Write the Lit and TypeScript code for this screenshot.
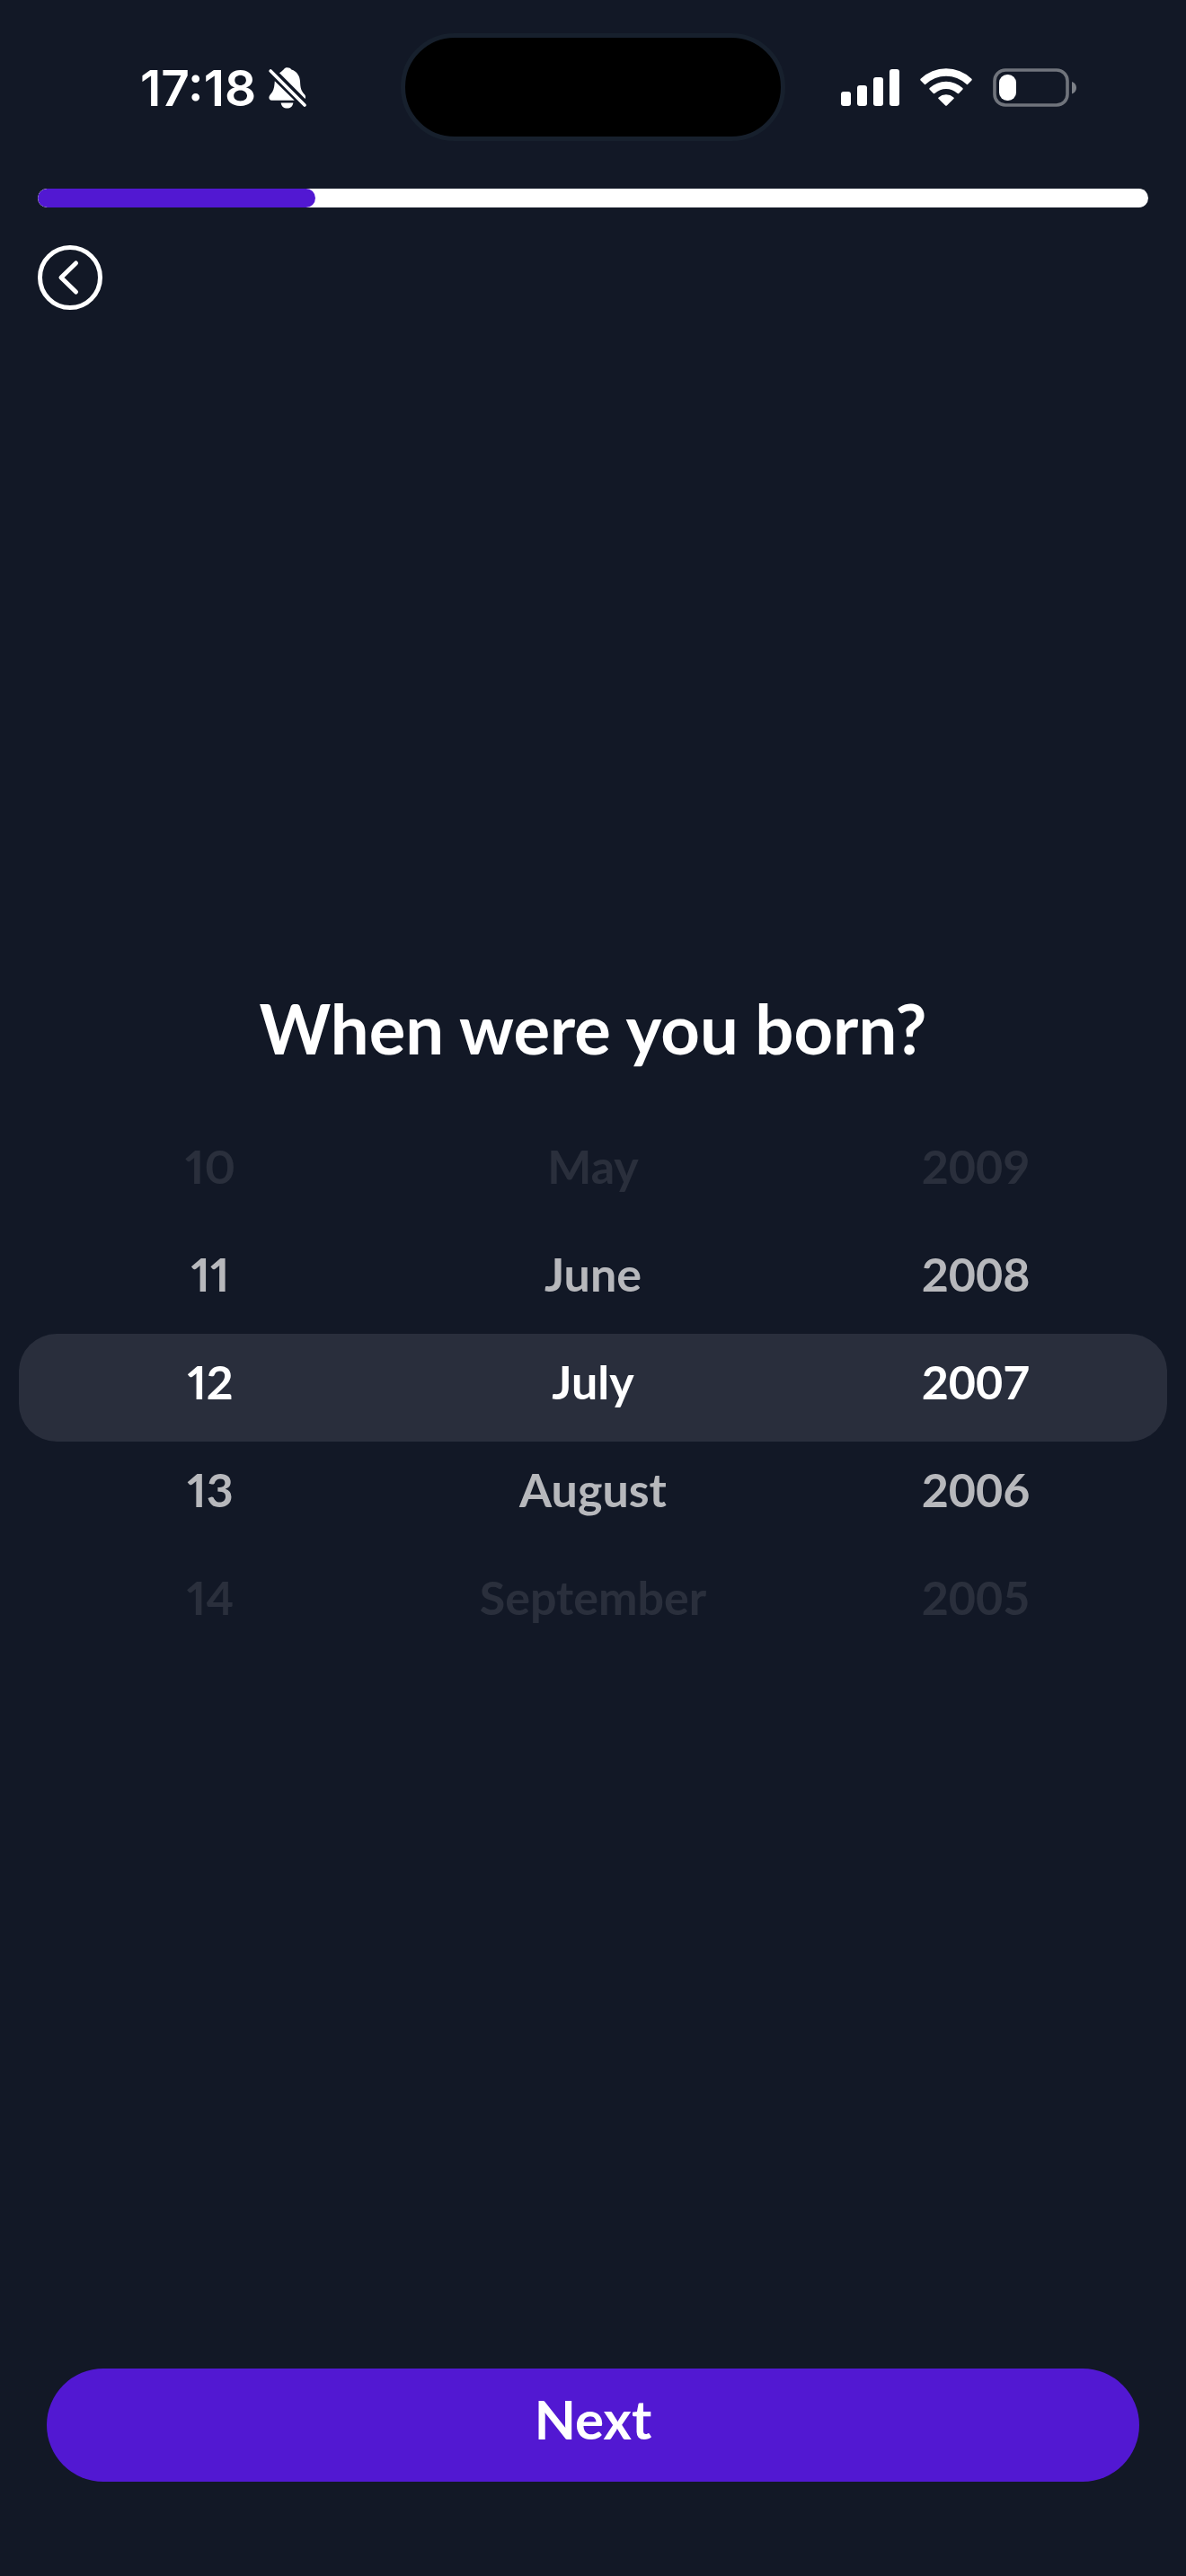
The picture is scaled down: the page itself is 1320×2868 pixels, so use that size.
import { LitElement, html, css } from "lit";
import { customElement, property, state } from "lit/decorators.js";

const MONTHS = [
  "January", "February", "March", "April", "May", "June",
  "July", "August", "September", "October", "November", "December",
];
const DAYS = Array.from({ length: 31 }, (_, i) => String(i + 1));
const YEARS = Array.from({ length: 100 }, (_, i) => String(2024 - i));

@customElement("status-bar")
class StatusBar extends LitElement {
  static styles = css`
    :host {
      display: grid;
      grid-template-columns: 1fr auto 1fr;
      align-items: center;
      padding-top: 37px;
    }
    .left {
      display: flex;
      align-items: center;
      gap: 14px;
      padding: 2px 0 0 156px;
    }
    .time {
      font: 600 55px/60px Inter, "Liberation Sans", sans-serif;
      color: #fff;
    }
    .island {
      box-sizing: border-box;
      width: 428px;
      height: 120px;
      border: 5px solid #17202d;
      border-radius: 60px;
      background: #000;
    }
    .right {
      display: flex;
      align-items: center;
      justify-content: flex-end;
      gap: 23px;
      padding-right: 121px;
    }
    svg {
      display: block;
    }
  `;

  render() {
    return html`
      <div class="left">
        <time class="time">17:18</time>
        <svg width="42" height="46" viewBox="0 0 42 46" role="img" aria-label="Silent mode">
          <g fill="#fff">
            <path d="M12 6.2C14 4.6 15.6 3.4 16.6 2.4C17.6 .9 19 .3 20.8 .3C22.8 .3 24.4 1.1 25.4 2.5C31.4 4.4 34.6 9.3 35 15.5C35.3 23 36.2 26.3 40 30.2C41.1 31.5 41.4 33 40.6 35Z" />
            <path d="M6.8 15.2L28.8 36.8H3.4C1.4 36.8 .4 35.4 .4 33.6C.4 31 2.6 30 4.2 27.2C6.2 23.6 6.4 20 6.8 15.2Z" />
            <path d="M13.6 39.4H27.4C26.8 43.2 24.2 45.6 20.5 45.6C16.8 45.6 14.2 43.2 13.6 39.4Z" />
          </g>
          <path d="M2.2 4L40 42" fill="none" stroke="#121826" stroke-width="8" />
          <path d="M2.2 4L40 42" fill="none" stroke="#fff" stroke-width="3.6" stroke-linecap="round" />
        </svg>
      </div>
      <div class="island"></div>
      <div class="right">
        <svg width="65" height="41" viewBox="0 0 65 41" fill="#fff" role="img" aria-label="Mobile signal">
          <rect x="0" y="25" width="11" height="16" rx="3" />
          <rect x="18" y="18" width="11" height="23" rx="3" />
          <rect x="36" y="9" width="11" height="32" rx="3" />
          <rect x="54" y="0" width="11" height="41" rx="3" />
        </svg>
        <svg width="58" height="42" viewBox="0 0 58 42" fill="#fff" role="img" aria-label="Wi-Fi">
          <path d="M.6 11.8Q-.2 12.8 .8 13.8L4.8 17.8Q5.6 18.6 6.6 17.6A32.5 32.5 0 0 1 51.4 17.6Q52.4 18.6 53.2 17.8L57.2 13.8Q58.2 12.8 57.4 11.8A41 41 0 0 0 .6 11.8Z" />
          <path d="M10.6 22Q9.8 23 10.7 23.8L14.8 27.9Q15.7 28.7 16.7 27.8A18.5 18.5 0 0 1 41.3 27.8Q42.3 28.7 43.2 27.9L47.3 23.8Q48.2 23 47.4 22A27 27 0 0 0 10.6 22Z" />
          <path d="M20.6 32.4Q19.8 33.2 20.6 34L28.2 41.5Q29 42.2 29.8 41.5L37.4 34Q38.2 33.2 37.4 32.4A13 13 0 0 0 20.6 32.4Z" />
        </svg>
        <svg width="94" height="43" viewBox="0 0 94 43" role="img" aria-label="Battery low">
          <rect x="2" y="2" width="81" height="39" rx="12" fill="none" stroke="#fff" stroke-opacity=".4" stroke-width="3.6" />
          <path d="M88 15C91 16 93 18.4 93 21.8S91 27.6 88 28.6Z" fill="#fff" fill-opacity=".45" />
          <rect x="7" y="7" width="19" height="29" rx="9" fill="#fff" />
        </svg>
      </div>
    `;
  }
}

@customElement("wheel-column")
class WheelColumn extends LitElement {
  static styles = css`
    :host {
      display: block;
    }
    .list {
      margin: 0;
      padding: 0;
      list-style: none;
    }
    .item {
      display: block;
      box-sizing: border-box;
      width: 100%;
      height: 120px;
      margin: 0;
      padding: 0 0 14px;
      border: 0;
      background: none;
      color: rgba(255, 255, 255, 0.1);
      font: 700 52px/64px Lato, "Liberation Sans", sans-serif;
      text-align: center;
      cursor: pointer;
    }
    .proportional .item {
      font-variant-numeric: proportional-nums;
    }
    .near {
      color: #b7b8bc;
    }
    .current {
      color: #fff;
    }
  `;

  @property() label = "";
  @property({ type: Boolean }) proportional = false;
  @property({ attribute: false }) values: string[] = [];
  @property({ type: Number }) selected = 0;

  private tone(offset: number) {
    return offset === 0 ? "current" : Math.abs(offset) === 1 ? "near" : "far";
  }

  render() {
    const n = this.values.length;
    return html`
      <ul class="list ${this.proportional ? "proportional" : ""}" aria-label=${this.label}>
        ${[-2, -1, 0, 1, 2].map((offset) => {
          const index = (this.selected + offset + n) % n;
          return html`<li>
            <button
              type="button"
              class="item ${this.tone(offset)}"
              aria-pressed=${offset === 0 ? "true" : "false"}
              @click=${() => (this.selected = index)}
            >${this.values[index]}</button>
          </li>`;
        })}
      </ul>
    `;
  }
}

@customElement("app-root")
class AppRoot extends LitElement {
  static styles = css`
    :host {
      display: flex;
      flex-direction: column;
      box-sizing: border-box;
      min-height: 100vh;
      background: #121826;
      color: #fff;
      font-family: Lato, "Liberation Sans", sans-serif;
    }
    .top {
      display: flex;
      flex-direction: column;
      align-items: flex-start;
      gap: 42px;
      padding: 53px 42px 0;
    }
    .track {
      width: 100%;
      height: 21px;
      border-radius: 11px;
      background: #fff;
      overflow: hidden;
    }
    .fill {
      height: 100%;
      border-radius: 11px;
      background: #5218d2;
    }
    .back {
      padding: 0;
      border: 0;
      background: none;
      cursor: pointer;
    }
    .back svg {
      display: block;
    }
    .main {
      flex: 1;
      display: flex;
      flex-direction: column;
      justify-content: center;
      gap: 52px;
      padding: 0 21px 40px;
    }
    .title {
      margin: 0;
      font-size: 76px;
      line-height: 96px;
      font-weight: 700;
      text-align: center;
    }
    .picker {
      display: grid;
      grid-template-columns: repeat(3, 1fr);
      position: relative;
      isolation: isolate;
    }
    .picker::before {
      content: "";
      position: absolute;
      inset: 240px 0;
      z-index: -1;
      border-radius: 42px;
      background: #292e3c;
    }
    .footer {
      padding: 0 52px 105px;
    }
    .next {
      display: block;
      width: 100%;
      height: 126px;
      padding: 0 0 14px;
      border: 0;
      border-radius: 63px;
      background: #5218d2;
      color: #fff;
      font: 700 60px/76px Lato, "Liberation Sans", sans-serif;
      cursor: pointer;
    }
  `;

  @state() private progress = 25;

  render() {
    return html`
      <status-bar></status-bar>
      <header class="top">
        <div class="track" role="progressbar" aria-label="Progress" aria-valuenow=${this.progress} aria-valuemin="0" aria-valuemax="100">
          <div class="fill" style="width: ${this.progress}%"></div>
        </div>
        <button class="back" type="button" aria-label="Back">
          <svg width="72" height="72" viewBox="0 0 72 72" fill="none" stroke="#fff" stroke-width="5">
            <circle cx="36" cy="36" r="33.5" />
            <path d="M42.5 20L26 36L42.5 52" stroke-linecap="round" stroke-linejoin="round" />
          </svg>
        </button>
      </header>
      <main class="main">
        <h1 class="title">When were you born?</h1>
        <div class="picker">
          <wheel-column label="Day" proportional .values=${DAYS} .selected=${11}></wheel-column>
          <wheel-column label="Month" .values=${MONTHS} .selected=${6}></wheel-column>
          <wheel-column label="Year" .values=${YEARS} .selected=${17}></wheel-column>
        </div>
      </main>
      <footer class="footer">
        <button class="next" type="button">Next</button>
      </footer>
    `;
  }
}
